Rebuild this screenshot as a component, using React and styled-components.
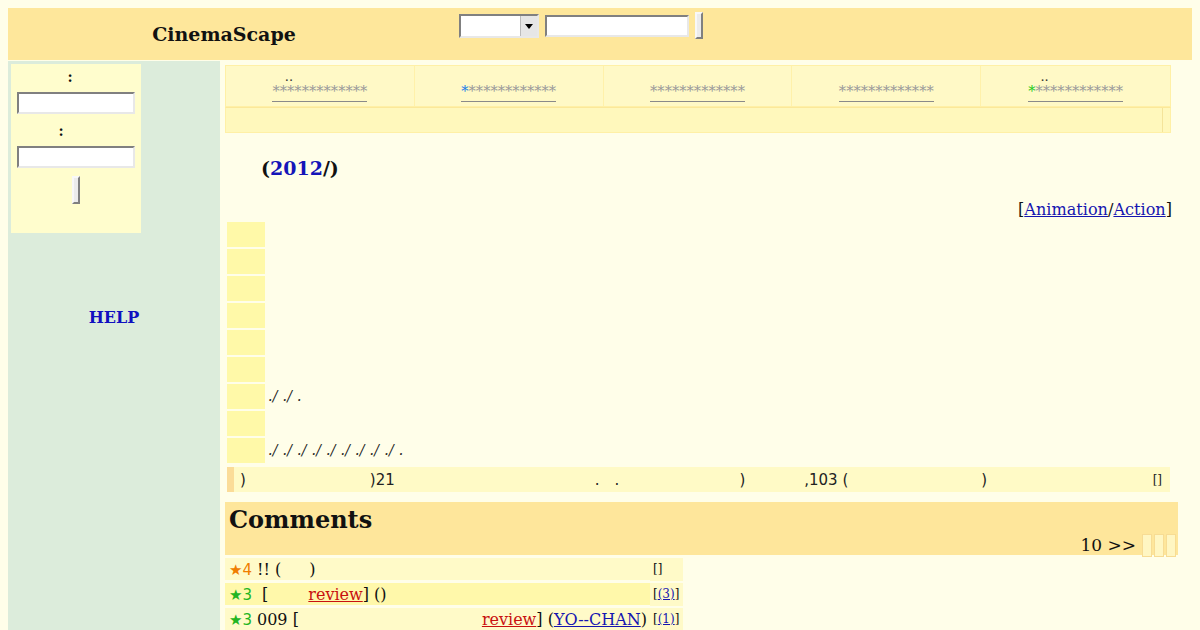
import React from 'react'
import styled, {createGlobalStyle} from 'styled-components'

const GlobalStyle = createGlobalStyle`
  html, body { overflow: hidden; }
  body {
    margin: 8px;
    background: #fffee9;
    font-family: "DejaVu Serif", serif;
    color: #111;
  }
`

const Header = styled.div`
  display: grid;
  grid-template-columns: 432px 1fr;
  height: 52px;
  background: #fee79b;
`

const Logo = styled.div`
  text-align: center;
  line-height: 52px;
  font-size: 19px;
  font-weight: bold;
`

const SearchForm = styled.div`
  display: flex;
  align-items: flex-start;
  gap: 6px;
  padding: 6px 0 0 19px;
`

const FakeSelect = styled.div`
  display: flex;
  width: 80px;
  height: 24px;
  box-sizing: border-box;
  background: #fff;
  border: 2px solid;
  border-color: #808080 #e8e8e8 #e8e8e8 #808080;
  justify-content: flex-end;
`

const SelectArrow = styled.div`
  width: 16px;
  background: #e6e6e6;
  border-left: 1px solid #bbb;
  display: flex;
  align-items: center;
  justify-content: center;
  &::after {
    content: '';
    border-left: 4px solid transparent;
    border-right: 4px solid transparent;
    border-top: 5px solid #000;
  }
`

const TextBox = styled.div`
  width: ${p => p.$w}px;
  height: ${p => p.$h}px;
  margin-top: ${p => p.$top || 0}px;
  box-sizing: border-box;
  background: #fff;
  border: 2px solid;
  border-color: #808080 #e8e8e8 #e8e8e8 #808080;
`

const Btn = styled.div`
  width: 8px;
  height: ${p => p.$h}px;
  margin-top: ${p => p.$top || 0}px;
  box-sizing: border-box;
  background: #ececec;
  border: 2px solid;
  border-color: #f8f8f8 #808080 #808080 #f8f8f8;
`

const Body = styled.div`
  display: grid;
  grid-template-columns: 212px 1fr;
  column-gap: 1px;
  margin-top: 1px;
`

const Sidebar = styled.div`
  background: #dcecdb;
  padding: 3px;
  min-height: 600px;
`

const LoginBox = styled.div`
  width: 130px;
  height: 169px;
  box-sizing: border-box;
  background: #fffdcd;
  display: flex;
  flex-direction: column;
  align-items: center;
  padding-top: 5px;
`

const Label = styled.div`
  font-size: 14px;
  font-weight: bold;
  line-height: 16px;
  margin: ${p => p.$m};
`

const HelpLink = styled.div`
  margin-top: 75px;
  text-align: center;
  font-size: 16px;
  font-weight: bold;
  color: #1010c0;
`

const Main = styled.div`
  padding: 4px 21px 0 4px;
`

const Tabs = styled.div`
  display: grid;
  grid-template-columns: repeat(5, 1fr);
  background: #fff9c6;
  border: 1px solid #fff0a6;
`

const Tab = styled.div`
  height: 40px;
  border-right: 1px solid #fff1aa;
  display: flex;
  flex-direction: column;
  align-items: center;
  justify-content: flex-end;
  padding-bottom: 4px;
  box-sizing: border-box;
  &:last-child { border-right: none; }
`

const TabDots = styled.div`
  font-size: 13px;
  line-height: 12px;
  height: 12px;
  color: #333;
`

const Stars = styled.span`
  font-size: 14.6px;
  line-height: 16px;
  color: #9a9a9a;
  border-bottom: 1px solid #8a8a8a;
  padding-bottom: 2px;
`

const Mark = styled.span`
  color: ${p => p.$c};
`

const TabFoot = styled.div`
  display: grid;
  grid-template-columns: 1fr 8px;
  height: 24px;
  background: #fff8bc;
  border: 1px solid #fff0a6;
  border-top: 1px solid #fbe89a;
  & > div:last-child { border-left: 1px solid #f4e49a; }
`

const Gap = styled.span`
  display: inline-block;
  width: ${p => p.$w}px;
`

const FilmTitle = styled.h1`
  margin: 24px 0 0 36px;
  font-size: 19px;
  line-height: 22px;
  font-weight: bold;
  color: #111;
`

const Blue = styled.span`
  color: #1515b8;
`

const Genre = styled.div`
  text-align: right;
  margin: 21px -1px 0 0;
  font-size: 16.1px;
  line-height: 20px;
`

const Link = styled.a`
  color: ${p => p.$c || '#1515b0'};
  text-decoration: underline;
`

const InfoList = styled.div`
  margin-top: 2px;
  padding-left: 2px;
`

const InfoRow = styled.div`
  display: grid;
  grid-template-columns: 38px 1fr;
  height: 25px;
  margin-bottom: 2px;
`

const InfoKey = styled.div`
  background: #fff9a8;
`

const InfoVal = styled.div`
  font-size: 14px;
  letter-spacing: 0.3px;
  line-height: 25px;
  padding-left: 3px;
  color: #222;
  font-style: italic;
`

const Bar = styled.div`
  display: flex;
  align-items: center;
  height: 25px;
  margin: 4px 1px 0 2px;
  background: #fffac6;
  font-family: "DejaVu Sans", sans-serif;
  font-size: 15px;
  color: #222;
`

const BarEdge = styled.div`
  width: 7px;
  align-self: stretch;
  background: #fbdc98;
  margin-right: 6px;
`

const Small = styled.span`
  font-family: "DejaVu Serif", serif;
  font-size: 12px;
  margin-left: auto;
  margin-right: 8px;
`

const CommentsHead = styled.div`
  margin: 10px -7px 0 0;
  height: 53px;
  background: #fee69b;
  display: flex;
  flex-direction: column;
  padding: 0 2px 0 4px;
  box-sizing: border-box;
`

const CommentsTitle = styled.h2`
  margin: 4px 0 0;
  font-size: 24px;
  line-height: 28px;
  font-weight: bold;
`

const Pager = styled.div`
  display: flex;
  justify-content: flex-end;
  align-items: flex-end;
  font-size: 17px;
  line-height: 20px;
  margin-top: auto;
  gap: 2px;
`

const PagerText = styled.span`
  margin-right: 4px;
  padding-bottom: 2px;
`

const PageBox = styled.span`
  width: 8px;
  height: 21px;
  background: #fff6c2;
  border: 1px solid #f7dc94;
`

const CommentList = styled.div`
  width: 458px;
  margin-top: 3px;
`

const CommentRow = styled.div`
  display: grid;
  grid-template-columns: 1fr 33px;
  height: 22px;
  margin-bottom: 3px;
  background: ${p => p.$hi ? '#fff8aa' : '#fffac8'};
`

const CommentText = styled.div`
  font-size: 16px;
  line-height: 23px;
  padding-left: 4px;
  white-space: nowrap;
  overflow: hidden;
`

const Score = styled.span`
  font-family: "DejaVu Sans", sans-serif;
  font-size: 15px;
  color: ${p => p.$c};
  margin-right: 5px;
`

const CommentSide = styled.div`
  font-size: 12px;
  line-height: 23px;
  padding-left: 3px;
  background: #fffac8;
`

const tabs = [
  {dots: true},
  {mark: '#1a7ee8'},
  {},
  {},
  {dots: true, mark: '#22cc22'},
]

const infos = ['', '', '', '', '', '', './ ./ .', '', './ ./ ./ ./ ./ ./ ./ ./ ./ .']

export default function App() {
  return (
    <>
      <GlobalStyle />
      <Header>
        <Logo>CinemaScape</Logo>
        <SearchForm>
          <FakeSelect><SelectArrow /></FakeSelect>
          <TextBox $w={144} $h={22} $top={1} />
          <Btn $h={27} $top={-2} />
        </SearchForm>
      </Header>
      <Body>
        <Sidebar>
          <LoginBox>
            <Label $m="0 0 7px -12px">:</Label>
            <TextBox $w={118} $h={22} />
            <Label $m="9px 0 7px -30px">:</Label>
            <TextBox $w={118} $h={22} />
            <Btn $h={28} $top={8} />
          </LoginBox>
          <HelpLink>HELP</HelpLink>
        </Sidebar>
        <Main>
          <Tabs>
            {tabs.map((t, i) => (
              <Tab key={i}>
                <TabDots>{t.dots ? <>..<Gap $w={62} /></> : null}</TabDots>
                <Stars>
                  {t.mark ? <Mark $c={t.mark}>*</Mark> : '*'}************
                </Stars>
              </Tab>
            ))}
          </Tabs>
          <TabFoot><div /><div /></TabFoot>

          <FilmTitle>(<Blue>2012</Blue>/)</FilmTitle>
          <Genre>[<Link>Animation</Link>/<Link>Action</Link>]</Genre>

          <InfoList>
            {infos.map((v, i) => (
              <InfoRow key={i}>
                <InfoKey />
                <InfoVal>{v}</InfoVal>
              </InfoRow>
            ))}
          </InfoList>

          <Bar>
            <BarEdge />
            )<Gap $w={124} />)21<Gap $w={200} />.<Gap $w={15} />.<Gap $w={120} />)
            <Gap $w={59} />,103 (<Gap $w={133} />)
            <Small>[]</Small>
          </Bar>

          <CommentsHead>
            <CommentsTitle>Comments</CommentsTitle>
            <Pager>
              <PagerText>10 &gt;&gt;</PagerText>
              <PageBox /><PageBox /><PageBox />
            </Pager>
          </CommentsHead>

          <CommentList>
            <CommentRow>
              <CommentText><Score $c="#f07d00">★4</Score>!! (<Gap $w={28} />)</CommentText>
              <CommentSide>[]</CommentSide>
            </CommentRow>
            <CommentRow $hi>
              <CommentText><Score $c="#22b522">★3</Score> [<Gap $w={40} /><Link $c="#c81010">review</Link>] ()</CommentText>
              <CommentSide>[<Link>(3)</Link>]</CommentSide>
            </CommentRow>
            <CommentRow>
              <CommentText><Score $c="#22b522">★3</Score>009 [<Gap $w={183} /><Link $c="#c81010">review</Link>] (<Link>YO--CHAN</Link>)</CommentText>
              <CommentSide>[<Link>(1)</Link>]</CommentSide>
            </CommentRow>
          </CommentList>
        </Main>
      </Body>
    </>
  )
}
